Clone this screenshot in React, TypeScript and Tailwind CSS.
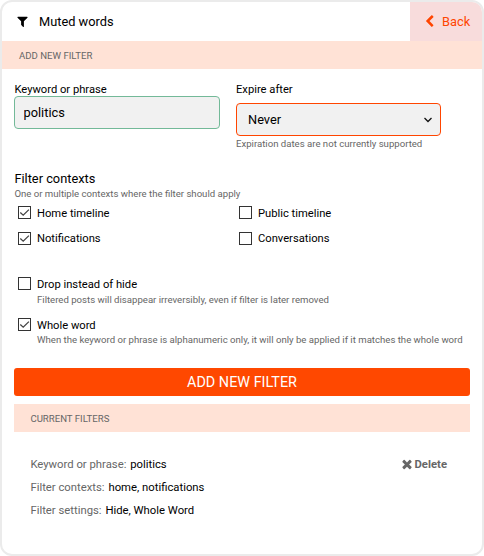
import type { ReactNode } from 'react';

function Glyph({ d, className }: { d: string; className: string }) {
  return (
    <svg viewBox="0 0 1792 1792" fill="currentColor" className={className} aria-hidden="true">
      <path d={d} />
    </svg>
  );
}

const FILTER =
  'M1595 295q17 41-14 70l-493 493v742q0 42-39 59-13 5-25 5-27 0-45-19l-256-256q-19-19-19-45v-486l-493-493q-31-29-14-70 17-39 59-39h1280q42 0 59 39z';
const CHEVRON_LEFT =
  'M1427 301l-531 531 531 531q19 19 19 45t-19 45l-166 166q-19 19-45 19t-45-19l-742-742q-19-19-19-45t19-45l742-742q19-19 45-19t45 19l166 166q19 19 19 45t-19 45z';
const TIMES =
  'M1490 1322q0 40-28 68l-136 136q-28 28-68 28t-68-28l-294-294-294 294q-28 28-68 28t-68-28l-136-136q-28-28-28-68t28-68l294-294-294-294q-28-28-28-68t28-68l136-136q28-28 68-28t68 28l294 294 294-294q28-28 68-28t68 28l136 136q28 28 28 68t-28 68l-294 294 294 294q28 28 28 68z';

function Check({ label, checked = false, low = false }: { label: string; checked?: boolean; low?: boolean }) {
  return (
    <label className="flex h-[13px] items-center gap-[6px] whitespace-nowrap text-[11.2px] leading-[14px]">
      <span className="flex size-[13px] shrink-0 border border-[#333]">
        {checked && (
          <svg viewBox="0 0 11 11" className="size-[11px]" fill="none" stroke="#444" strokeWidth="1.3">
            <path d="M1.3 5.6 4.2 8.2 9.9 2.6" />
          </svg>
        )}
      </span>
      <span className={low ? 'pt-[2px]' : ''}>{label}</span>
    </label>
  );
}

function Hint({ children }: { children: ReactNode }) {
  return <p className="whitespace-nowrap text-[9.6px] leading-3 text-[#666]">{children}</p>;
}

function Setting({ name, value }: { name: string; value: string }) {
  return (
    <div className="whitespace-nowrap">
      <span className="text-[#666]">{name}:</span> <span className="ml-[1px]">{value}</span>
    </div>
  );
}

export default function App() {
  return (
    <div className="h-[556px] w-[484px] overflow-hidden rounded-[12px] border-2 border-[#ebebeb] bg-white font-[Roboto,sans-serif] text-black">
      <header className="flex h-[39px] items-stretch justify-between">
        <h1 className="flex items-center gap-[10px] pl-[14px] text-[12.8px] font-normal">
          <Glyph d={FILTER} className="size-[13px]" />
          Muted words
        </h1>
        <button className="flex w-[72px] items-center gap-[6px] bg-[#f8dcdc] pl-[13px] text-[12.8px] text-[#ff4500]">
          <Glyph d={CHEVRON_LEFT} className="size-[13px]" />
          Back
        </button>
      </header>
      <h2 className="flex h-7 items-center bg-[#ffe2d6] pt-[2px] pl-[17px] text-[9.6px] text-[#666]">ADD NEW FILTER</h2>

      <main className="pt-[14px] pr-3 pl-3">
        <div className="flex gap-4">
          <div className="w-[206px]">
            <div className="h-[13px] pl-[0.4px] text-[11.2px] leading-[13px]">Keyword or phrase</div>
            <input
              readOnly
              value="politics"
              className="block h-[33px] w-full rounded-[4px] border border-[#73b998] bg-[#f1f1f1] px-[8.5px] text-[12.8px] outline-none"
            />
          </div>
          <div className="w-[205px]">
            <div className="h-[13px] text-[11.2px] leading-[13px]">Expire after</div>
            <div className="mt-[7px] flex h-[33px] items-center justify-between rounded-[4px] border border-[#ff4500] bg-[#f1f1f1] pr-2 pl-[11px] text-[12.8px]">
              Never
              <svg viewBox="0 0 8 6" className="h-[6px] w-2" fill="none" stroke="#111" strokeWidth="1.3">
                <path d="M.5 1 4 4.5 7.5 1" />
              </svg>
            </div>
            <div className="pt-[2px]">
              <Hint>Expiration dates are not currently supported</Hint>
            </div>
          </div>
        </div>

        <section className="pt-[21px]">
          <h3 className="h-[17px] pl-[0.4px] text-[12.8px] leading-4 font-normal">Filter contexts</h3>
          <div className="pl-[0.4px]">
            <Hint>One or multiple contexts where the filter should apply</Hint>
          </div>
          <div className="grid grid-cols-[221px_1fr] gap-y-[13px] pt-[6px] pl-1">
            <Check label="Home timeline" checked low />
            <Check label="Public timeline" low />
            <Check label="Notifications" checked />
            <Check label="Conversations" />
          </div>
        </section>

        <section className="pt-8 pl-1">
          <Check label="Drop instead of hide" low />
          <div className="pt-1 pl-[19px]">
            <Hint>Filtered posts will disappear irreversibly, even if filter is later removed</Hint>
          </div>
          <div className="pt-3">
            <Check label="Whole word" checked low />
          </div>
          <div className="pt-[3px] pl-[19px]">
            <Hint>When the keyword or phrase is alphanumeric only, it will only be applied if it matches the whole word</Hint>
          </div>
        </section>

        <button className="mt-[22px] flex h-7 w-full items-center justify-center rounded-[3px] bg-[#ff4800] pt-[1px] text-[14.4px] text-white">
          ADD NEW FILTER
        </button>

        <h2 className="mt-2 flex h-7 items-center bg-[#ffe2d6] pt-[2px] pl-[16.4px] text-[9.6px] text-[#666]">CURRENT FILTERS</h2>
        <div className="flex items-start justify-between pt-[21px] pr-[23px] pl-[16.4px] text-[11.3px] leading-[23px]">
          <div>
            <Setting name="Keyword or phrase" value="politics" />
            <Setting name="Filter contexts" value="home, notifications" />
            <Setting name="Filter settings" value="Hide, Whole Word" />
          </div>
          <button className="flex items-center gap-[1px] font-bold text-[#666]">
            <Glyph d={TIMES} className="mb-[2px] size-[14px]" />
            Delete
          </button>
        </div>
      </main>
    </div>
  );
}
